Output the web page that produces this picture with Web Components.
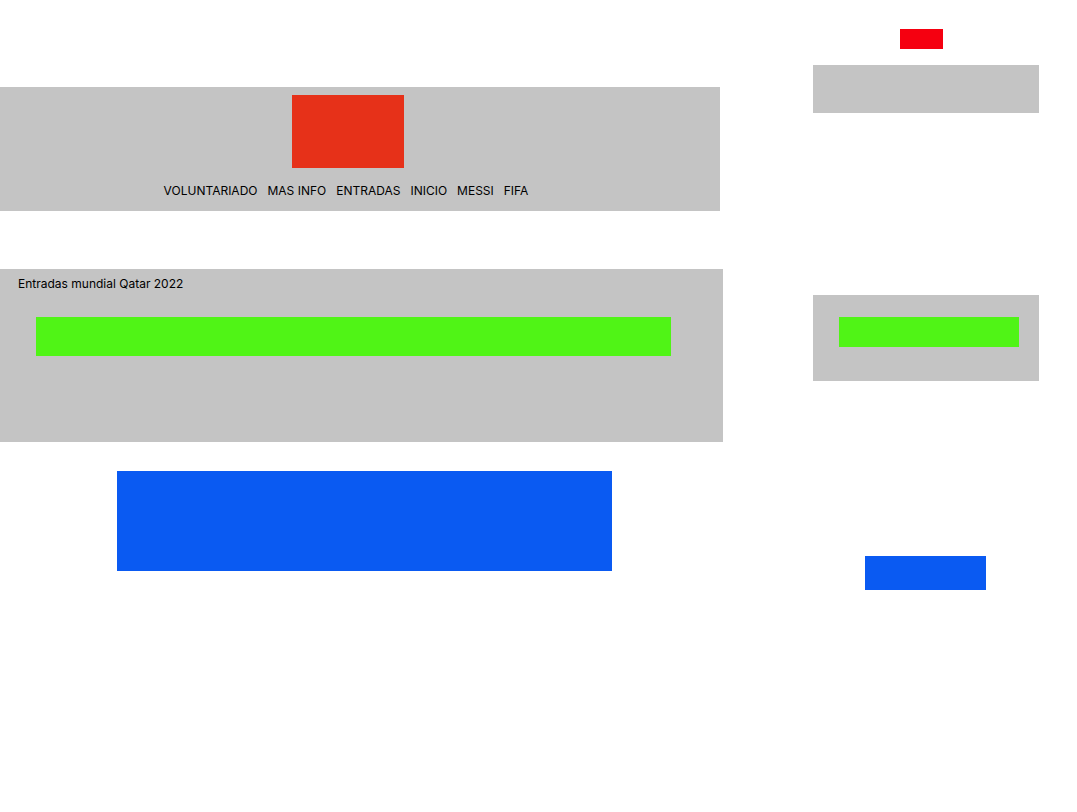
<!DOCTYPE html>
<html lang="es">
<head>
<meta charset="utf-8">
<meta name="viewport" content="width=device-width, initial-scale=1">
<title>Entradas mundial Qatar 2022</title>
<style>
  body { margin: 0; background: #fff; color: #000; font: 12px/15px Inter, "Liberation Sans", sans-serif; }
</style>
</head>
<body>
<wire-board>
  <desktop-view slot="desktop"></desktop-view>
  <mobile-view slot="mobile"></mobile-view>
</wire-board>
<script>
  const define = (name, html) => customElements.define(name, class extends HTMLElement {
    constructor() {
      super();
      this.attachShadow({ mode: "open" }).innerHTML = html;
    }
  });

  /* A flat colour block; its user sets the size. */
  define("color-block", `
    <style>
      :host { display: block; background: #c4c4c4; }
      :host([tone="logo"]) { background: #e63119; }
      :host([tone="red"]) { background: #f50010; }
      :host([tone="green"]) { background: #50f416; }
      :host([tone="blue"]) { background: #0a5af2; }
    </style>
    <slot></slot>`);

  define("site-header", `
    <style>
      :host { display: flex; flex-direction: column; align-items: center; gap: 15px;
              padding: 8px 24px 13px 0; background: #c4c4c4; }
      .logo { width: 112px; height: 73px; }
      nav { display: flex; flex-wrap: wrap; justify-content: center; gap: 10px; padding-right: 4px; }
      a { color: inherit; text-decoration: none; }
    </style>
    <color-block class="logo" tone="logo"></color-block>
    <nav>
      <a href="#voluntariado">VOLUNTARIADO</a>
      <a href="#info">MAS INFO</a>
      <a href="#entradas">ENTRADAS</a>
      <a href="#inicio">INICIO</a>
      <a href="#messi">MESSI</a>
      <a href="#fifa">FIFA</a>
    </nav>`);

  define("ticket-panel", `
    <style>
      :host { display: flex; flex-direction: column; gap: 26px; padding: 7px 52px 86px 36px; background: #c4c4c4; }
      h1 { margin: 0 0 0 -18px; font: inherit; }
      .bar { height: 39px; }
    </style>
    <h1><slot></slot></h1>
    <color-block class="bar" tone="green"></color-block>`);

  define("desktop-view", `
    <style>
      :host { display: block; padding-top: 87px; }
      site-header { margin-right: 3px; }
      ticket-panel { margin-top: 58px; }
      .footer { height: 100px; margin: 29px 111px 0 117px; }
    </style>
    <site-header></site-header>
    <ticket-panel>Entradas mundial Qatar 2022</ticket-panel>
    <color-block class="footer" tone="blue"></color-block>`);

  define("mobile-view", `
    <style>
      :host { display: flex; flex-direction: column; padding-top: 29px; }
      .logo { width: 43px; height: 20px; margin-left: 87px; }
      .header { height: 48px; margin-top: 16px; }
      .panel { margin-top: 182px; padding: 22px 20px 34px 26px; }
      .bar { height: 30px; }
      .footer { height: 34px; margin: 175px 53px 0 52px; }
    </style>
    <color-block class="logo" tone="red"></color-block>
    <color-block class="header"></color-block>
    <color-block class="panel"><color-block class="bar" tone="green"></color-block></color-block>
    <color-block class="footer" tone="blue"></color-block>`);

  define("wire-board", `
    <style>
      :host { display: grid; grid-template-columns: minmax(0, 1fr) 226px; column-gap: 90px;
              padding-right: 38px; min-height: 100vh; box-sizing: border-box; }
    </style>
    <slot name="desktop"></slot>
    <slot name="mobile"></slot>`);
</script>
</body>
</html>
